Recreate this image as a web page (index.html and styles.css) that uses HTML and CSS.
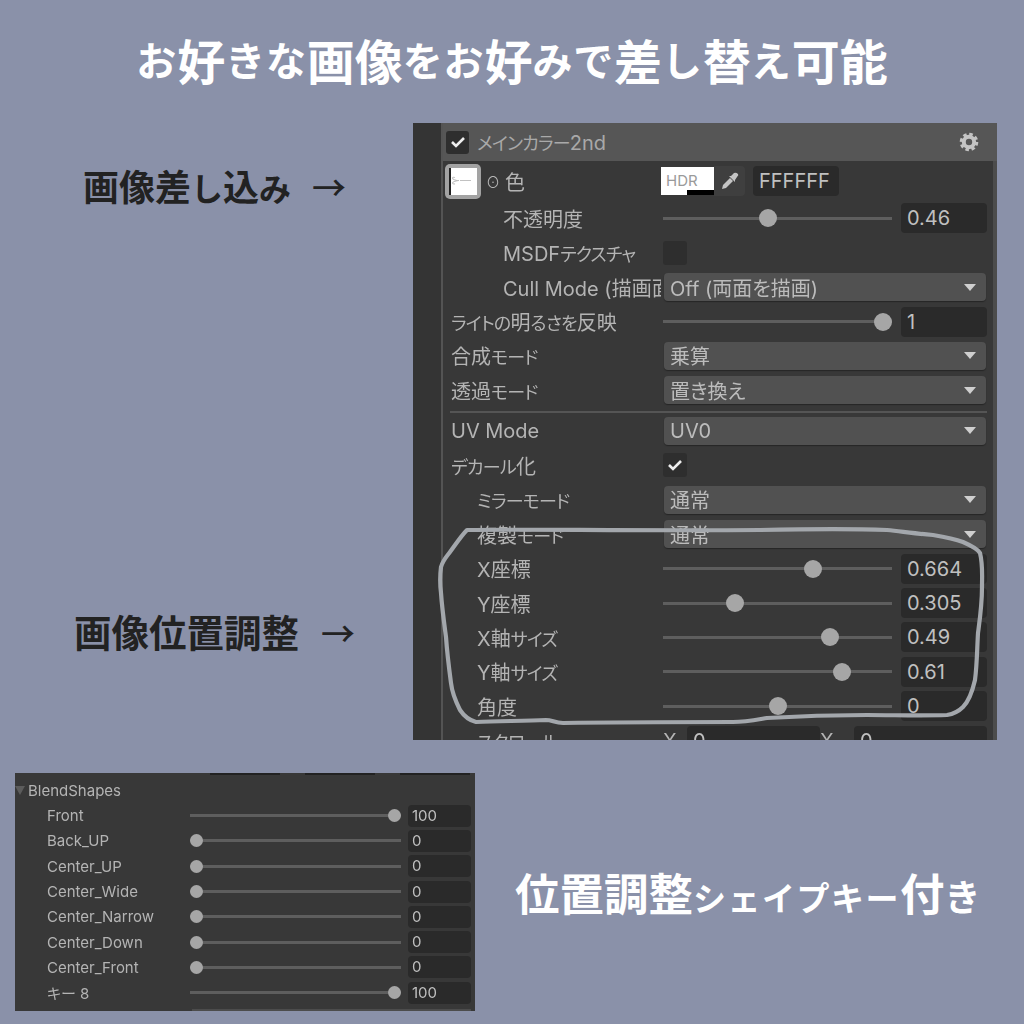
FILE: index.html
```html
<!DOCTYPE html>
<html lang="ja">
<head>
  <title>シェイプキー付き</title>
  <meta charset="utf-8">
  <link rel="stylesheet" href="styles.css">
</head>
<body>
  <h1 class="title"><span class="kana">お</span>好<span class="kana">きな</span>画像<span class="kana">をお</span>好<span class="kana">みで</span>差<span class="kana">し</span>替<span class="kana">え</span>可能</h1>

  <div class="top">
    <div class="callouts">
      <p class="callout callout-first">画像差<span class="kana">し</span>込<span class="kana">み</span><span class="arrow">→</span></p>
      <p class="callout callout-second">画像位置調整<span class="arrow">→</span></p>
    </div>

    <div class="inspector">
      <div class="strip"></div>
      <div class="inspector-body">
        <div class="head">
          <span class="check"><svg width="16" height="14" viewBox="0 0 16 14"><polyline points="2,7 6,11 14,3"/></svg></span>
          <span class="head-name"><span class="kn">メインカラー</span>2nd</span>
          <svg class="gear" width="20" height="20" viewBox="0 0 20 20">
            <circle class="gear-teeth" cx="10" cy="10" r="7.6"/>
            <circle class="gear-ring" cx="10" cy="10" r="5.2"/>
          </svg>
        </div>

        <div class="color-row">
          <div class="color-name">
            <span class="thumb"><span class="thumb-in">⊱—</span></span>
            <span class="dot">⊙</span>
            <span>色</span>
          </div>
          <div class="color-tools">
            <span class="hdr">HDR<i class="hdr-bar"></i></span>
            <span class="dropper"><svg width="20" height="20" viewBox="0 0 20 20"><path class="dropper-tip" d="M2 18 L3 14 L10 7 L13 10 L6 17 Z"/><path class="dropper-head" d="M9 5 L11 5 L14 2 Q16 1 18 3 Q19 4 17 6 L15 9 L15 11 Z"/></svg></span>
            <span class="field hex">FFFFFF</span>
          </div>
        </div>

        <div class="row"><span class="name deep">不透明度</span><div class="slider"><div class="track"><i class="knob" style="left:46%"></i></div><span class="field">0.46</span></div></div>
        <div class="row"><span class="name deep">MSDF<span class="kn">テクスチャ</span></span><span class="check check-box"></span></div>
        <div class="row"><span class="name deep">Cull Mode (描画面</span><div class="select"><span>Off (両面を描画)</span><i class="tri"></i></div></div>
        <div class="row"><span class="name"><span class="kn">ライトの</span>明<span class="kn">るさを</span>反映</span><div class="slider"><div class="track"><i class="knob" style="left:96%"></i></div><span class="field">1</span></div></div>
        <div class="row"><span class="name">合成<span class="kn">モード</span></span><div class="select"><span>乗算</span><i class="tri"></i></div></div>
        <div class="row"><span class="name">透過<span class="kn">モード</span></span><div class="select"><span>置き換え</span><i class="tri"></i></div></div>
        <div class="rule"></div>
        <div class="row"><span class="name">UV Mode</span><div class="select"><span>UV0</span><i class="tri"></i></div></div>
        <div class="row"><span class="name"><span class="kn">デカール</span>化</span><span class="check check-box"><svg width="16" height="14" viewBox="0 0 16 14"><polyline points="2,7 6,11 14,3"/></svg></span></div>
        <div class="row"><span class="name mid"><span class="kn">ミラーモード</span></span><div class="select"><span>通常</span><i class="tri"></i></div></div>
        <div class="row"><span class="name mid">複製<span class="kn">モード</span></span><div class="select"><span>通常</span><i class="tri"></i></div></div>
        <div class="row"><span class="name mid">X座標</span><div class="slider"><div class="track"><i class="knob" style="left:65.5%"></i></div><span class="field">0.664</span></div></div>
        <div class="row"><span class="name mid">Y座標</span><div class="slider"><div class="track"><i class="knob" style="left:31.5%"></i></div><span class="field">0.305</span></div></div>
        <div class="row"><span class="name mid">X軸<span class="kn">サイズ</span></span><div class="slider"><div class="track"><i class="knob" style="left:73%"></i></div><span class="field">0.49</span></div></div>
        <div class="row"><span class="name mid">Y軸<span class="kn">サイズ</span></span><div class="slider"><div class="track"><i class="knob" style="left:78%"></i></div><span class="field">0.61</span></div></div>
        <div class="row"><span class="name mid">角度</span><div class="slider"><div class="track"><i class="knob" style="left:50%"></i></div><span class="field">0</span></div></div>
        <div class="row"><span class="name mid"><span class="kn">スクロール</span></span><div class="pair"><span>X</span><span class="field">0</span><span>X</span><span class="field">0</span></div></div>
      </div>

      <!-- hand drawn loop -->
      <svg class="loop" width="584" height="617" viewBox="413 123 584 617">
        <path d="M467 530 C520 529 640 531 760 530 C810 529 860 529 887 530 C905 532 918 534 933 535 C945 537 955 539 963 542 C972 546 978 549 980 553 C983 565 982 575 982 587 C982 605 980 618 978 633 C977 650 977 665 975 680 C972 693 968 702 963 707 C958 712 953 714 947 715 C920 716 895 715 867 715 C835 715 800 716 767 718 C755 720 745 722 733 722 C690 722 620 722 563 723 C555 723 552 720 546 720 C525 721 500 721 476 722 C468 720 464 716 460 710 C455 700 452 692 451 683 C449 668 447 652 446 637 C444 622 442 608 441 593 C440 585 440 575 441 567 C443 560 447 556 450 552 C456 544 461 536 467 530 Z"/>
      </svg>
    </div>
  </div>

  <div class="bottom">
    <div class="shapes">
      <div class="cuts"><i></i><i></i><i></i></div>
      <div class="shapes-head"><i class="fold"></i>BlendShapes</div>
      <div class="shape"><span>Front</span><div class="track"><i class="knob" style="left:97%"></i></div><span class="field">100</span></div>
      <div class="shape"><span>Back_UP</span><div class="track"><i class="knob" style="left:3%"></i></div><span class="field">0</span></div>
      <div class="shape"><span>Center_UP</span><div class="track"><i class="knob" style="left:3%"></i></div><span class="field">0</span></div>
      <div class="shape"><span>Center_Wide</span><div class="track"><i class="knob" style="left:3%"></i></div><span class="field">0</span></div>
      <div class="shape"><span>Center_Narrow</span><div class="track"><i class="knob" style="left:3%"></i></div><span class="field">0</span></div>
      <div class="shape"><span>Center_Down</span><div class="track"><i class="knob" style="left:3%"></i></div><span class="field">0</span></div>
      <div class="shape"><span>Center_Front</span><div class="track"><i class="knob" style="left:3%"></i></div><span class="field">0</span></div>
      <div class="shape"><span>キー 8</span><div class="track"><i class="knob" style="left:97%"></i></div><span class="field">100</span></div>
      <div class="sliver"></div>
    </div>
    <p class="caption">位置調整<span class="kana">シェイプキー</span>付<span class="kana kana-end">き</span></p>
  </div>
</body>
</html>
```

FILE: styles.css
```css
* {
  box-sizing: border-box;
}
body {
  margin: 0;
  width: 1024px;
  height: 1024px;
  overflow: hidden;
  background: #8a91a9;
  font-family: Inter, "Noto Sans CJK JP", sans-serif;
}
p,
h1 {
  margin: 0;
}

/* big poster text */
.title {
  height: 123px;
  padding-bottom: 6px;
  display: flex;
  align-items: center;
  justify-content: center;
  font-family: "Noto Sans CJK JP", sans-serif;
  font-size: 48px;
  font-weight: 700;
  color: #fff;
  white-space: nowrap;
}
.title .kana {
  font-size: 40px;
  letter-spacing: .8px;
}
.top {
  display: flex;
  height: 617px;
}
.callouts {
  width: 413px;
}
.callout {
  font-family: "Noto Sans CJK JP", sans-serif;
  font-weight: 700;
  color: #222;
  line-height: 50px;
  white-space: nowrap;
}
.callout-first {
  margin: 37px 0 0 83px;
  font-size: 36px;
}
.callout-first .kana {
  font-size: 32px;
}
.callout-first .arrow {
  margin-left: 21px;
}
.callout-second {
  margin: 394px 0 0 74px;
  font-size: 37.5px;
}
.arrow {
  margin-left: 22px;
  font-size: 34px;
  font-weight: 500;
}

/* inspector screenshot */
.inspector {
  position: relative;
  width: 584px;
  height: 617px;
  display: flex;
  overflow: hidden;
  background: #383838;
  color: #b4b4b4;
  font-size: 20px;
  font-feature-settings: "palt";
}
.kn {
  font-size: 18px;
  letter-spacing: -.8px;
}
.strip {
  width: 28px;
  flex: none;
  background: #343434;
}
.inspector-body {
  flex: 1;
  padding-right: 6px;
  border-left: 2px solid #545454;
  border-right: 4px solid #4c4c4c;
  filter: blur(.5px);
}
.head {
  height: 38px;
  margin-right: -10px;
  padding: 0 18px 0 3px;
  display: flex;
  align-items: center;
  background: #565656;
}
.head-name {
  margin-left: 8px;
  flex: 1;
  color: #a9a9a9;
}
.check {
  width: 23px;
  height: 23px;
  display: flex;
  align-items: center;
  justify-content: center;
  background: #2e2e2e;
  border-radius: 3px;
}
.check polyline {
  fill: none;
  stroke: #eee;
  stroke-width: 2.6;
}
.check-box {
  width: 24px;
  height: 24px;
}
.gear-teeth {
  fill: none;
  stroke: #c4c4c4;
  stroke-width: 3.4;
  stroke-dasharray: 3.4 2.57;
}
.gear-ring {
  fill: none;
  stroke: #c4c4c4;
  stroke-width: 4;
}

.color-row {
  height: 40px;
  display: grid;
  grid-template-columns: 218px 1fr;
  align-items: center;
}
.color-name {
  padding-left: 2px;
  display: flex;
  align-items: center;
}
.thumb {
  width: 36px;
  height: 35px;
  padding: 4px;
  background: #a3a3a3;
  border-radius: 5px;
}
.thumb-in {
  display: block;
  height: 100%;
  background: #fff;
  border-left: 2px solid #222;
  color: #bbb;
  font-size: 11px;
  line-height: 24px;
  overflow: hidden;
}
.dot {
  margin: 0 5px 0 5px;
  font-size: 14px;
}
.color-tools {
  display: flex;
  align-items: center;
}
.hdr {
  position: relative;
  width: 53px;
  height: 28px;
  padding-left: 5px;
  background: #fff;
  color: #9a9a9a;
  font-size: 15px;
  line-height: 28px;
}
.hdr-bar {
  position: absolute;
  right: 0;
  bottom: 0;
  width: 27px;
  height: 5px;
  background: #000;
}
.dropper {
  width: 31px;
  height: 30px;
  display: flex;
  align-items: center;
  justify-content: center;
  background: #3f3f3f;
  border-radius: 0 4px 4px 0;
}
.dropper-tip,
.dropper-head {
  fill: #c4c4c4;
}
.hex {
  width: 85px;
  margin-left: 8px;
}

.row {
  height: 34.45px;
  display: grid;
  grid-template-columns: 218px 1fr;
  align-items: center;
  column-gap: 2px;
}
.name {
  padding-left: 8px;
  white-space: nowrap;
  overflow: hidden;
}
.mid {
  padding-left: 34px;
}
.deep {
  padding-left: 60px;
}
.select {
  height: 28px;
  margin: 0 1px 0 1px;
  padding: 0 10px 0 6px;
  display: flex;
  align-items: center;
  justify-content: space-between;
  background: #515151;
  border-radius: 4px;
  box-shadow: 0 1px 1px #262626;
  color: #bcbcbc;
}
.tri {
  width: 0;
  height: 0;
  border-left: 6px solid transparent;
  border-right: 6px solid transparent;
  border-top: 7px solid #cfcfcf;
}
.slider {
  display: flex;
  align-items: center;
  gap: 9px;
}
.track {
  position: relative;
  height: 3px;
  background: #5e5e5e;
}
.slider .track {
  flex: 1;
}
.knob {
  position: absolute;
  top: 50%;
  width: 18px;
  height: 18px;
  margin: -9px 0 0 -9px;
  background: #a6a6a6;
  border-radius: 50%;
}
.field {
  width: 86px;
  height: 30px;
  padding-left: 6px;
  display: block;
  background: #2a2a2a;
  border-radius: 4px;
  color: #c0c0c0;
  line-height: 30px;
}
.rule {
  height: 2px;
  margin: 3px 0 1px 7px;
  background: #555;
}
.pair {
  display: grid;
  grid-template-columns: 24px 133px 34px 1fr;
  align-items: center;
}
.pair .field {
  width: auto;
}
.loop {
  position: absolute;
  top: 0;
  left: 0;
  filter: blur(.4px);
}
.loop path {
  fill: none;
  stroke: #a3a7ac;
  stroke-width: 4.2;
  stroke-linejoin: round;
}

/* lower part */
.bottom {
  display: flex;
  align-items: center;
  margin-top: 33px;
  padding-left: 15px;
}
.shapes {
  position: relative;
  width: 460px;
  height: 238px;
  padding-left: 13px;
  background: #383838;
  color: #b4b4b4;
  font-size: 15px;
  font-feature-settings: "palt";
  filter: blur(.4px);
}
.cuts {
  position: absolute;
  top: 0;
  left: 195px;
  display: flex;
  gap: 25px;
}
.cuts i {
  width: 70px;
  height: 2px;
  background: #222;
}
.sliver {
  position: absolute;
  right: 4px;
  bottom: 0;
  width: 279px;
  height: 2px;
  background: #4c4c4c;
}
.shapes-head {
  height: 30px;
  margin-left: -13px;
  display: flex;
  align-items: center;
  padding-top: 4px;
}
.fold {
  width: 0;
  height: 0;
  margin: 0 3px 0 0;
  border-left: 5px solid transparent;
  border-right: 5px solid transparent;
  border-top: 9px solid #5c5c5c;
}
.shape {
  height: 25.3px;
  margin-left: 19px;
  display: grid;
  grid-template-columns: 143px 211px 63px;
  align-items: center;
  white-space: nowrap;
}
.shape .knob {
  width: 13px;
  height: 13px;
  margin: -6.5px 0 0 -6.5px;
}
.shape .field {
  width: 63px;
  height: 22px;
  margin-left: 7px;
  padding-left: 4px;
  line-height: 22px;
}
.caption {
  margin: -2px 0 0 40px;
  font-family: "Noto Sans CJK JP", sans-serif;
  font-size: 44.5px;
  font-weight: 700;
  color: #fff;
  white-space: nowrap;
}
.caption .kana {
  font-size: 33px;
  letter-spacing: 1.5px;
}
.caption .kana-end {
  font-size: 36px;
}
```
